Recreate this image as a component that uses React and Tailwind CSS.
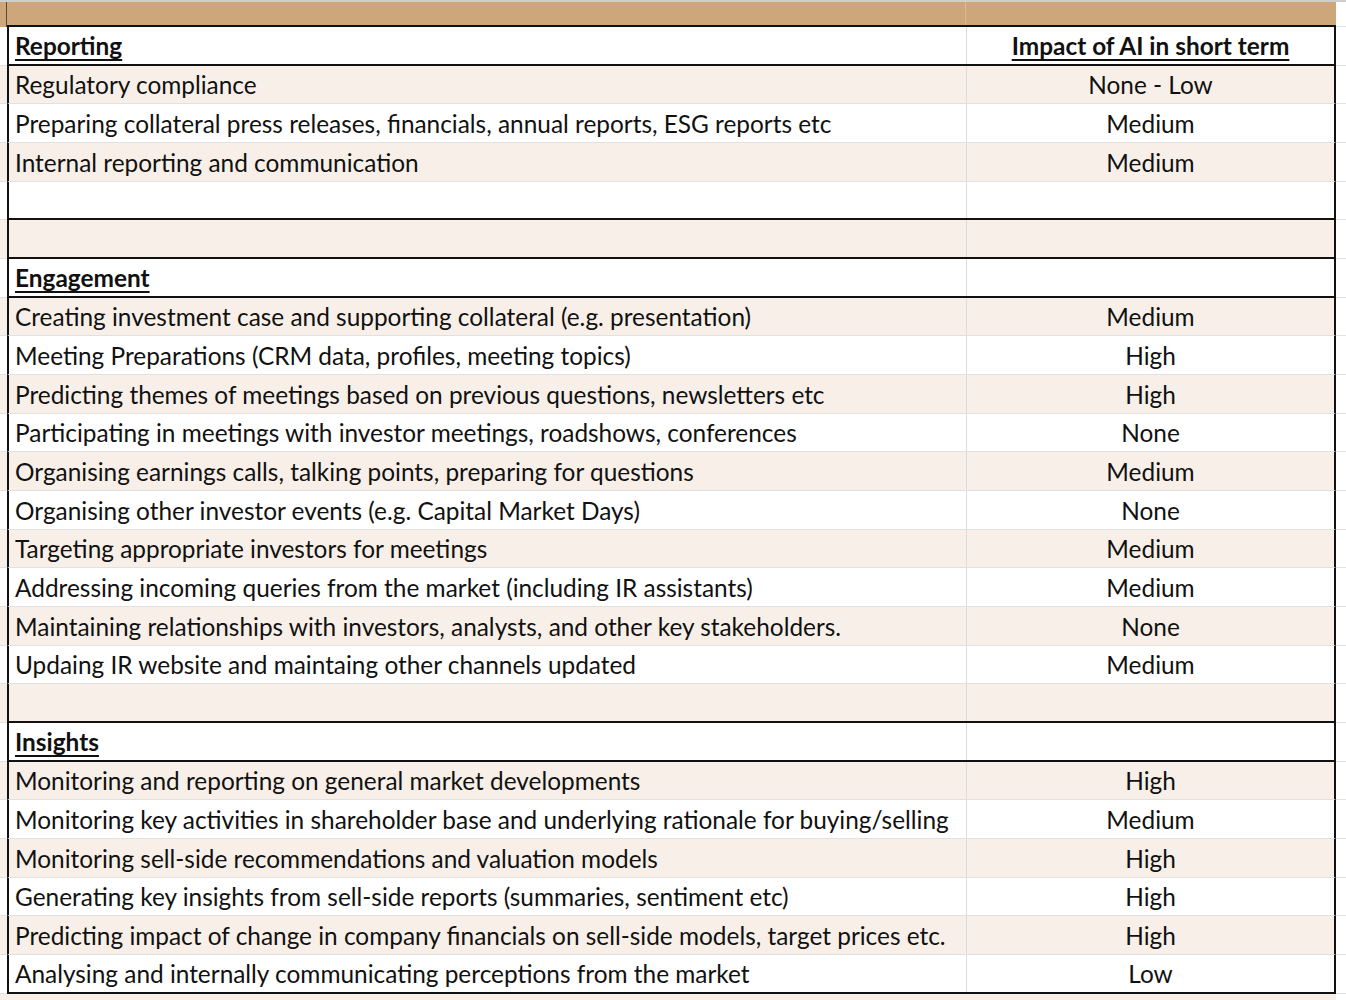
import React from "react";

const rows = [
  { kind: "head", text: "Reporting", impact: "Impact of AI in short term", line: true },
  { text: "Regulatory compliance", impact: "None - Low" },
  { text: "Preparing collateral press releases, financials, annual reports, ESG reports etc", impact: "Medium" },
  { text: "Internal reporting and communication", impact: "Medium" },
  { text: "", impact: "", line: true },
  { text: "", impact: "", line: true },
  { kind: "head", text: "Engagement", impact: "", line: true },
  { text: "Creating investment case and supporting collateral (e.g. presentation)", impact: "Medium" },
  { text: "Meeting Preparations (CRM data, profiles, meeting topics)", impact: "High" },
  { text: "Predicting themes of meetings based on previous questions, newsletters etc", impact: "High" },
  { text: "Participating in meetings with investor meetings, roadshows, conferences", impact: "None" },
  { text: "Organising earnings calls, talking points, preparing for questions", impact: "Medium" },
  { text: "Organising other investor events (e.g. Capital Market Days)", impact: "None" },
  { text: "Targeting appropriate investors for meetings", impact: "Medium" },
  { text: "Addressing incoming queries from the market (including IR assistants)", impact: "Medium" },
  { text: "Maintaining relationships with investors, analysts, and other key stakeholders.", impact: "None" },
  { text: "Updaing IR website and maintaing other channels updated", impact: "Medium" },
  { text: "", impact: "", line: true },
  { kind: "head", text: "Insights", impact: "", line: true },
  { text: "Monitoring and reporting on general market developments", impact: "High" },
  { text: "Monitoring key activities in shareholder base and underlying rationale for buying/selling", impact: "Medium" },
  { text: "Monitoring sell-side recommendations and valuation models", impact: "High" },
  { text: "Generating key insights from sell-side reports (summaries, sentiment etc)", impact: "High" },
  { text: "Predicting impact of change in company financials on sell-side models, target prices etc.", impact: "High" },
  { text: "Analysing and internally communicating perceptions from the market", impact: "Low", line: true },
];

function Row({ row, i }) {
  const bg = i % 2 === 0 ? "bg-white" : "bg-[#f8f0e8]";
  const head = row.kind === "head";
  const bottom = row.line
    ? "border-b-2 border-b-[#111]"
    : "border-b border-b-[#e1e1e1]";
  const headCls = head ? "font-bold underline decoration-2 underline-offset-[4px]" : "";
  return (
    <div className={`flex h-[38.68px] ${bg}`}>
      <div className="w-[7px] border-b border-b-[#e1e1e1]" />
      <div className={`flex w-[1329px] border-x-2 border-x-[#111] ${bottom}`}>
        <div className={`flex w-[957px] items-center pl-[6px] pt-[2px] whitespace-nowrap ${headCls}`}>
          {row.text}
        </div>
        <div
          className={`flex flex-1 items-center justify-center pt-[2px] border-l border-l-[#dcdcdc] whitespace-nowrap ${headCls}`}
        >
          {row.impact}
        </div>
      </div>
      <div className="w-[10px] bg-white border-b border-b-[#e1e1e1]" />
    </div>
  );
}

export default function App() {
  return (
    <div
      className="w-[1346px] h-[1000px] overflow-hidden bg-white text-[24.4px] leading-none text-[#111]"
      style={{ fontFamily: "Lato, 'Liberation Sans', sans-serif" }}
    >
      <div className="h-[2px] bg-[#cfcfcf]" />
      <div className="flex h-[25px]">
        <div className="w-[7px] bg-[#cda67a] border-r border-r-[#5a4a3a]" />
        <div className="flex w-[1329px] border-b-2 border-b-[#111] bg-[#cda67a]">
          <div className="w-[958px]" />
          <div className="flex-1 border-l border-l-[#d9b893]" />
        </div>
        <div className="w-[10px] bg-white border-b border-b-[#e1e1e1]" />
      </div>
      {rows.map((row, i) => (
        <Row key={i} row={row} i={i} />
      ))}
      <div className="flex h-[38.68px] bg-[#f8f0e8]">
        <div className="w-[1336px]" />
        <div className="w-[10px] bg-white" />
      </div>
    </div>
  );
}
